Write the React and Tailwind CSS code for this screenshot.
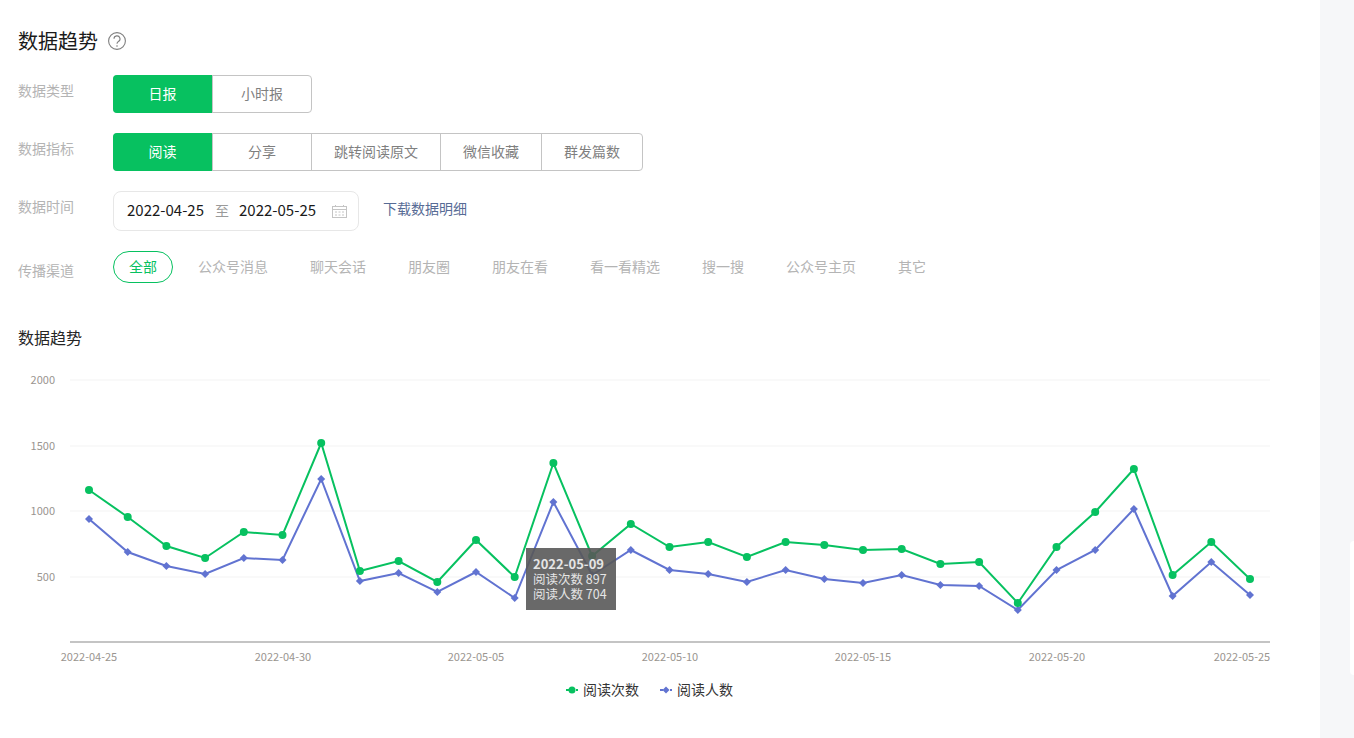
import React from "react";

const FONT = '"Noto Sans CJK SC", "Noto Sans", sans-serif';
const xs = Array.from({length: 31}, (_, i) => 89 + i * 38.7);

const readTimes = [490, 517, 546, 558, 532, 535, 443, 571, 561, 582, 540, 577, 463, 556, 524, 547, 542, 557, 542, 545, 550, 549, 564, 562, 603, 547, 512, 469, 575, 542, 579];
const readUsers = [519, 552, 566, 574, 558, 560, 479, 581, 573, 592, 572, 598, 502, 575, 550, 570, 574, 582, 570, 579, 583, 575, 585, 586, 610, 570, 550, 509, 596, 562, 595];

const yTicks = [[2000, 380], [1500, 446], [1000, 511], [500, 577]];
const xTicks = [["2022-04-25", 89], ["2022-04-30", 283], ["2022-05-05", 476], ["2022-05-10", 670], ["2022-05-15", 863], ["2022-05-20", 1057], ["2022-05-25", 1242]];
const channels = ["公众号消息", "聊天会话", "朋友圈", "朋友在看", "看一看精选", "搜一搜", "公众号主页", "其它"];

const toPoints = (ys) => ys.map((y, i) => `${xs[i]},${y}`).join(" ");
const diamond = (x, y, r) => `${x},${y - r} ${x + r},${y} ${x},${y + r} ${x - r},${y}`;

const Row = ({label, labelClass, children}) => (
    <div className="flex">
        <div className={`w-[95px] shrink-0 text-sm text-[#b4b4b4] ${labelClass}`}>{label}</div>
        {children}
    </div>
)

const Segment = ({items}) => (
    <div className="flex h-[38px] rounded border border-[#c4c4c4] text-sm text-[#7f7f7f]">
        {items.map(([text, width], i) => (
            <div key={text} style={{width}}
                 className={i === 0
                     ? "-m-px mr-0 h-[38px] pb-[2px] flex items-center justify-center rounded-l bg-[#07c160] text-white"
                     : "pb-[2px] flex items-center justify-center border-l border-[#c4c4c4]"}>
                {text}
            </div>
        ))}
    </div>
)

const Chart = () => (
    <div className="relative h-[370px] mt-[12px]">
        <svg width="1320" height="370" viewBox="0 360 1320 370" className="block">
            {yTicks.map(([label, y]) => (
                <g key={label}>
                    <line x1="70" x2="1270" y1={y} y2={y} stroke="#f3f3f3" strokeWidth="1"/>
                    <text x="55" y={y + 4} textAnchor="end" fontSize="11" fill="#9a9590" fontFamily={FONT}>{label}</text>
                </g>
            ))}
            <line x1="70" x2="1270" y1="642" y2="642" stroke="#c4c4c4" strokeWidth="2"/>
            {xTicks.map(([label, x]) => (
                <text key={label} x={x} y="661" textAnchor="middle" fontSize="11" fill="#9a9590" fontFamily={FONT}>{label}</text>
            ))}
            <polyline points={toPoints(readUsers)} fill="none" stroke="#6173d1" strokeWidth="2"/>
            {readUsers.map((y, i) => <polygon key={i} points={diamond(xs[i], y, 4)} fill="#6173d1"/>)}
            <polyline points={toPoints(readTimes)} fill="none" stroke="#07c160" strokeWidth="2"/>
            {readTimes.map((y, i) => <circle key={i} cx={xs[i]} cy={y} r="4" fill="#07c160"/>)}

            <line x1="566" x2="578" y1="690" y2="690" stroke="#07c160" strokeWidth="2" strokeDasharray="3 2"/>
            <circle cx="572" cy="690" r="3.5" fill="#07c160"/>
            <text x="583" y="695" fontSize="14" fill="#353535" fontFamily={FONT}>阅读次数</text>
            <line x1="660" x2="672" y1="690" y2="690" stroke="#6173d1" strokeWidth="2" strokeDasharray="3 2"/>
            <polygon points={diamond(666, 690, 3.5)} fill="#6173d1"/>
            <text x="677" y="695" fontSize="14" fill="#353535" fontFamily={FONT}>阅读人数</text>
        </svg>
        <div className="absolute left-[526px] top-[188px] w-[90px] h-[62px] bg-[#595959]/90 px-[7px] pt-[8px] text-[12.500px] leading-[15px] text-[#e5e5e5]">
            <div className="font-bold text-[13px]">2022-05-09</div>
            <div className="whitespace-nowrap">阅读次数 897</div>
            <div className="whitespace-nowrap">阅读人数 704</div>
        </div>
    </div>
)

const App = () => {
    return (
        <div className="flex h-screen overflow-hidden bg-white" style={{fontFamily: FONT}}>
            <div className="w-[1320px] shrink-0 pt-[26px]">
                <div className="pl-[18px] flex flex-col">
                    <div className="flex items-center h-[30px]">
                        <h1 className="text-xl text-[#1a1a1a]">数据趋势</h1>
                        <svg width="18" height="18" viewBox="0 0 18 18" className="ml-[10px]">
                            <circle cx="9" cy="9" r="8.4" fill="none" stroke="#7f7f7f" strokeWidth="1.1"/>
                            <path d="M6 6.800a3 3 0 1 1 4.400 2.700c-1 .6-1.400 1.200-1.400 2.300" fill="none" stroke="#7f7f7f" strokeWidth="1.1"/>
                            <circle cx="9" cy="14" r=".8" fill="#7f7f7f"/>
                        </svg>
                    </div>

                    <div className="mt-[19px]">
                        <Row label="数据类型" labelClass="pt-[5px]">
                            <Segment items={[["日报", 99], ["小时报", 99]]}/>
                        </Row>
                    </div>
                    <div className="mt-[20px]">
                        <Row label="数据指标" labelClass="pt-[5px]">
                            <Segment items={[["阅读", 99], ["分享", 99], ["跳转阅读原文", 129], ["微信收藏", 101], ["群发篇数", 101]]}/>
                        </Row>
                    </div>
                    <div className="mt-[20px]">
                        <Row label="数据时间" labelClass="pt-[5px]">
                            <div className="flex items-center w-[246px] h-[40px] rounded-lg border border-[#e7e7e7] pl-[13px] pr-[11px] pb-[2px] text-[15px] text-[#1a1a1a]">
                                <span>2022-04-25</span>
                                <span className="ml-[11px] mr-[10px] text-sm text-[#9a9a9a]">至</span>
                                <span>2022-05-25</span>
                                <svg width="15" height="14" viewBox="0 0 15 14" className="ml-auto mt-[2px]">
                                    <rect x=".5" y="2.500" width="14" height="11" fill="none" stroke="#c4c4c4" strokeWidth="1"/>
                                    <path d="M.5 5.500h14M3.500 1v2M11.500 1v2M3 8h2M6.500 8h2M10 8h2M3 11h2M6.500 11h2M10 11h2" stroke="#c4c4c4" strokeWidth="1"/>
                                </svg>
                            </div>
                            <a className="ml-[24px] pt-[7px] text-sm text-[#576b95]">下载数据明细</a>
                        </Row>
                    </div>
                    <div className="mt-[20px]">
                        <Row label="传播渠道" labelClass="pt-[9px]">
                            <div className="flex items-center h-[32px] text-sm text-[#b4b4b4]">
                                <div className="w-[60px] h-[32px] mr-[25px] pb-[2px] flex items-center justify-center rounded-2xl border border-[#07c160] text-[#07c160]">全部</div>
                                <div className="flex gap-[42px] pb-[2px]">
                                    {channels.map(c => <span key={c} className="whitespace-nowrap">{c}</span>)}
                                </div>
                            </div>
                        </Row>
                    </div>

                    <h2 className="mt-[43px] text-base leading-[22px] text-[#262626]">数据趋势</h2>
                </div>
                <Chart/>
            </div>
            <div className="flex-1 bg-[#f6f7f9] pt-[541px] pl-[30px]">
                <div className="h-[134px] rounded-l bg-white"></div>
            </div>
        </div>
    )
}

export default App
